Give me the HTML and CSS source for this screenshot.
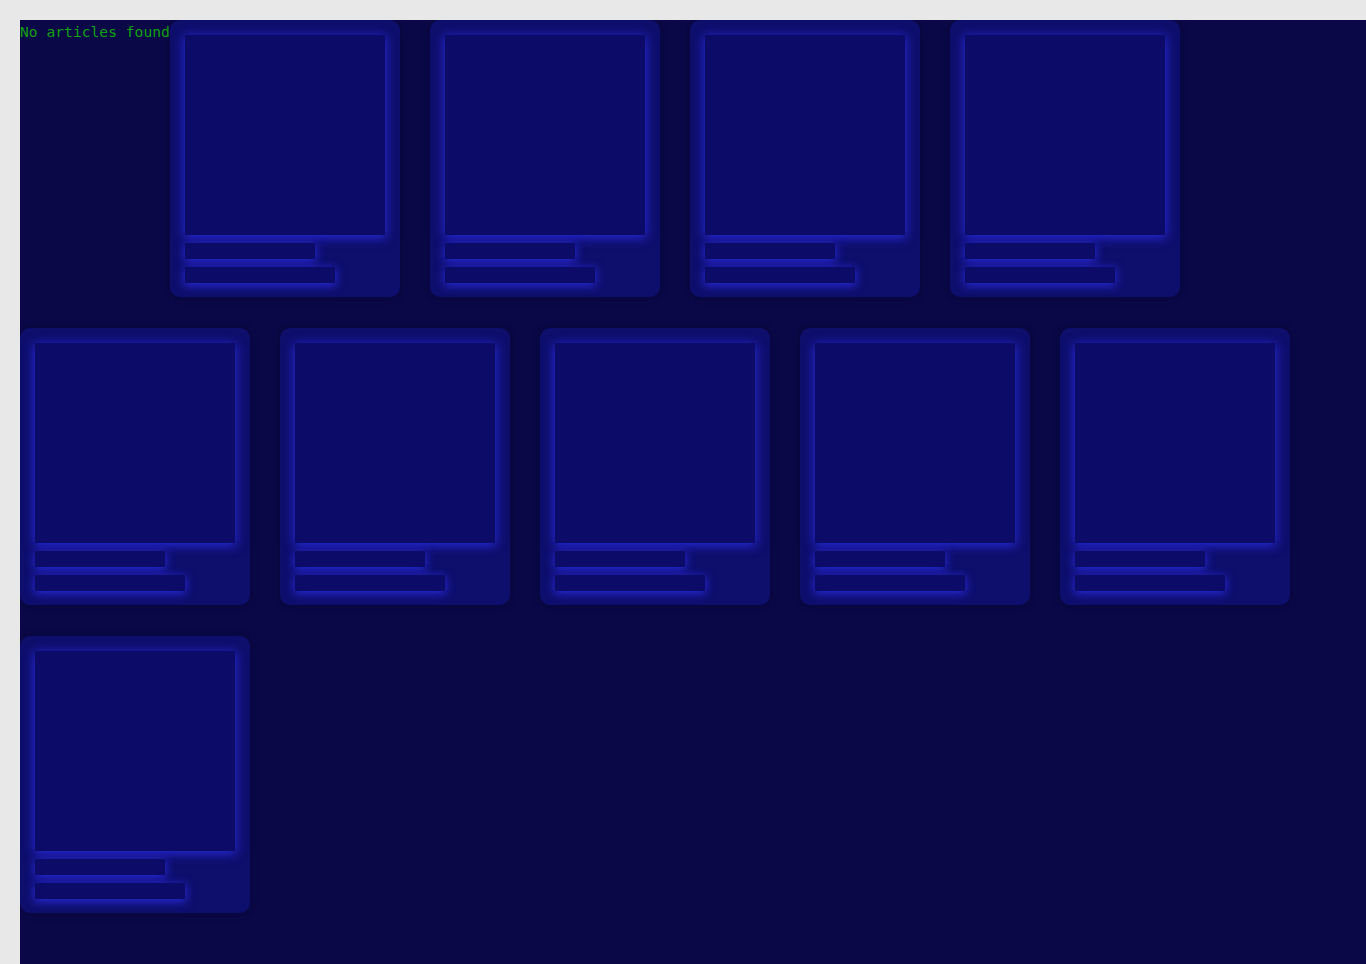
FILE: index.html
```html
<!DOCTYPE html>
<html lang="en">
<head>
<meta charset="utf-8">
<title>Articles</title>
<link rel="stylesheet" href="styles.css">
</head>
<body>
<main class="feed"><span class="empty">No articles found</span><div class="card"><div class="thumb"></div><div class="line short"></div><div class="line long"></div></div><div class="card"><div class="thumb"></div><div class="line short"></div><div class="line long"></div></div><div class="card"><div class="thumb"></div><div class="line short"></div><div class="line long"></div></div><div class="card"><div class="thumb"></div><div class="line short"></div><div class="line long"></div></div><div class="card"><div class="thumb"></div><div class="line short"></div><div class="line long"></div></div><div class="card"><div class="thumb"></div><div class="line short"></div><div class="line long"></div></div><div class="card"><div class="thumb"></div><div class="line short"></div><div class="line long"></div></div><div class="card"><div class="thumb"></div><div class="line short"></div><div class="line long"></div></div><div class="card"><div class="thumb"></div><div class="line short"></div><div class="line long"></div></div><div class="card"><div class="thumb"></div><div class="line short"></div><div class="line long"></div></div></main>
</body>
</html>
```
FILE: styles.css
```css
html {
  background: #e8e8e9;
}
body {
  margin: 20px 0 0 20px;
  background: #e8e8e9;
}
.feed {
  background: #0a0846;
  min-height: 100vh;
  line-height: 0;
}
.empty {
  font-family: "DejaVu Sans Mono", monospace;
  font-size: 14.65px;
  line-height: 24px;
  color: #12a012;
  vertical-align: top;
  display: inline-block;
}
.card {
  display: inline-block;
  vertical-align: top;
  width: 230px;
  box-sizing: border-box;
  padding: 15px 15px 14px;
  margin: 0 30px 31px 0;
  background: #0e0e6c;
  border-radius: 10px;
  box-shadow: 0 0 10px rgba(0, 0, 0, 0.15);
}
.thumb {
  width: 200px;
  height: 200px;
  background: #0c0c68;
  box-shadow: 0 2px 10px 1px #2828d4;
}
.line {
  height: 16px;
  margin-top: 8px;
  background: #0c0c68;
  box-shadow: 0 2px 10px 1px #2828d4;
}
.short {
  width: 130px;
}
.long {
  width: 150px;
}
```
